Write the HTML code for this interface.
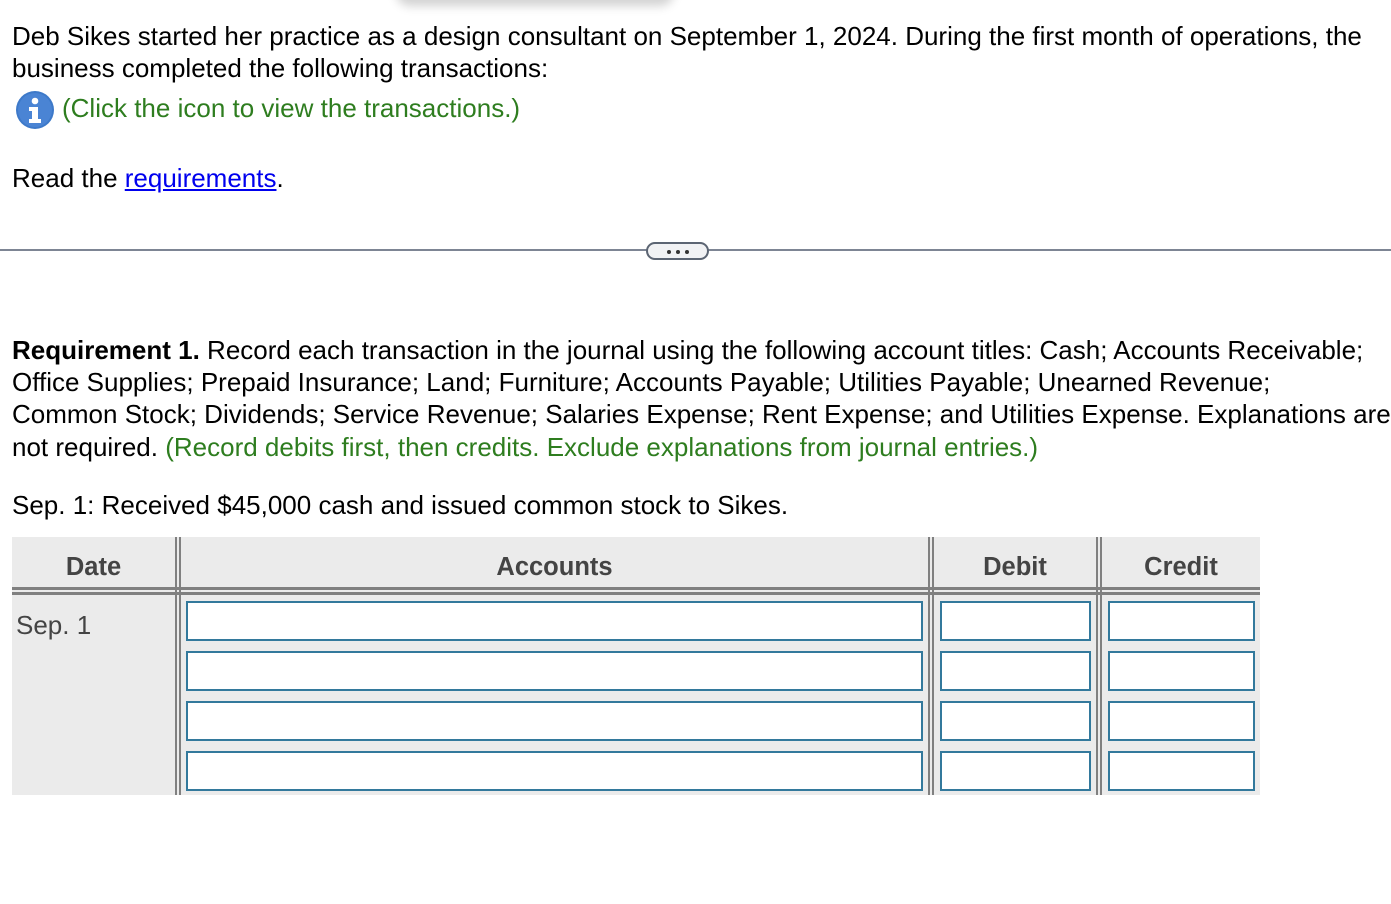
<!DOCTYPE html>
<html><head><meta charset="utf-8"><style>
body{margin:0;width:1391px;height:904px;background:#fff;position:relative;overflow:hidden;font-family:"Liberation Sans",Arial,sans-serif;font-size:26px;color:#000}
.t{position:absolute;left:12px;white-space:nowrap;line-height:32px}
.g{color:#2e7d1f}
a{color:#0000ee;text-decoration:underline}
.shadow{position:absolute;left:400px;top:-20px;width:270px;height:20px;box-shadow:0 2px 10px 4px rgba(0,0,0,0.18);border-radius:10px;background:#fff}
.hr{position:absolute;left:0;top:249px;width:1391px;height:2px;background:#7d8594}
.pill{position:absolute;left:646px;top:242px;width:59px;height:14px;border:2px solid #5c6573;border-radius:9px;background:#f1f2f4}
.dot{position:absolute;top:6px;width:4px;height:4px;border-radius:2px;background:#333}
.tbl{position:absolute;left:12px;top:537px;width:1248px;height:258px;background:#ebebeb}
.v{position:absolute;top:537px;height:258px;width:2px;background:#808080}
.h{position:absolute;left:12px;width:1248px;height:3px;background:#808080}
.hd{position:absolute;top:552px;font-weight:bold;font-size:25.5px;color:#444;text-align:center;line-height:30px}
.in{position:absolute;height:36px;border:2px solid #33799c;background:#fff;box-sizing:content-box}
</style></head><body>
<div class="shadow"></div>
<div class="t" style="top:20px">Deb Sikes started her practice as a design consultant on September 1, 2024. During the first month of operations, the</div>
<div class="t" style="top:52px">business completed the following transactions:</div>
<svg style="position:absolute;left:15px;top:90px" width="40" height="40" viewBox="0 0 40 40">
<circle cx="20" cy="20" r="19" fill="#3d79c9"/>
<circle cx="20" cy="20" r="17" fill="#4a84d4"/>
<circle cx="20" cy="11" r="3.3" fill="#fff"/>
<path d="M14 17h9v12h3v4H14v-4h3v-8h-3z" fill="#fff"/>
</svg>
<div class="t g" style="top:92px;left:62px">(Click the icon to view the transactions.)</div>
<div class="t" style="top:162px">Read the <a>requirements</a>.</div>
<div class="hr"></div>
<div class="pill"><div class="dot" style="left:19px"></div><div class="dot" style="left:28px"></div><div class="dot" style="left:37px"></div></div>
<div class="t" style="top:334px"><b>Requirement 1.</b> Record each transaction in the journal using the following account titles: Cash; Accounts Receivable;</div>
<div class="t" style="top:366px">Office Supplies; Prepaid Insurance; Land; Furniture; Accounts Payable; Utilities Payable; Unearned Revenue;</div>
<div class="t" style="top:398px">Common Stock; Dividends; Service Revenue; Salaries Expense; Rent Expense; and Utilities Expense. Explanations are</div>
<div class="t" style="top:431px">not required. <span class="g">(Record debits first, then credits. Exclude explanations from journal entries.)</span></div>
<div class="t" style="top:489px">Sep. 1: Received $45,000 cash and issued common stock to Sikes.</div>
<div class="tbl"></div>
<div class="h" style="top:587px"></div><div class="h" style="top:592px"></div>
<div class="v" style="left:175px"></div><div class="v" style="left:179px"></div>
<div class="v" style="left:928px"></div><div class="v" style="left:932px"></div>
<div class="v" style="left:1096px"></div><div class="v" style="left:1100px"></div>
<div class="hd" style="left:12px;width:163px">Date</div>
<div class="hd" style="left:181px;width:747px">Accounts</div>
<div class="hd" style="left:934px;width:162px">Debit</div>
<div class="hd" style="left:1102px;width:158px">Credit</div>
<div class="t" style="top:609px;left:16px;color:#444">Sep. 1</div>
<div class="in" style="left:186px;top:601px;width:733px"></div>
<div class="in" style="left:186px;top:651px;width:733px"></div>
<div class="in" style="left:186px;top:701px;width:733px"></div>
<div class="in" style="left:186px;top:751px;width:733px"></div>
<div class="in" style="left:940px;top:601px;width:147px"></div>
<div class="in" style="left:940px;top:651px;width:147px"></div>
<div class="in" style="left:940px;top:701px;width:147px"></div>
<div class="in" style="left:940px;top:751px;width:147px"></div>
<div class="in" style="left:1108px;top:601px;width:143px"></div>
<div class="in" style="left:1108px;top:651px;width:143px"></div>
<div class="in" style="left:1108px;top:701px;width:143px"></div>
<div class="in" style="left:1108px;top:751px;width:143px"></div>
</body></html>
